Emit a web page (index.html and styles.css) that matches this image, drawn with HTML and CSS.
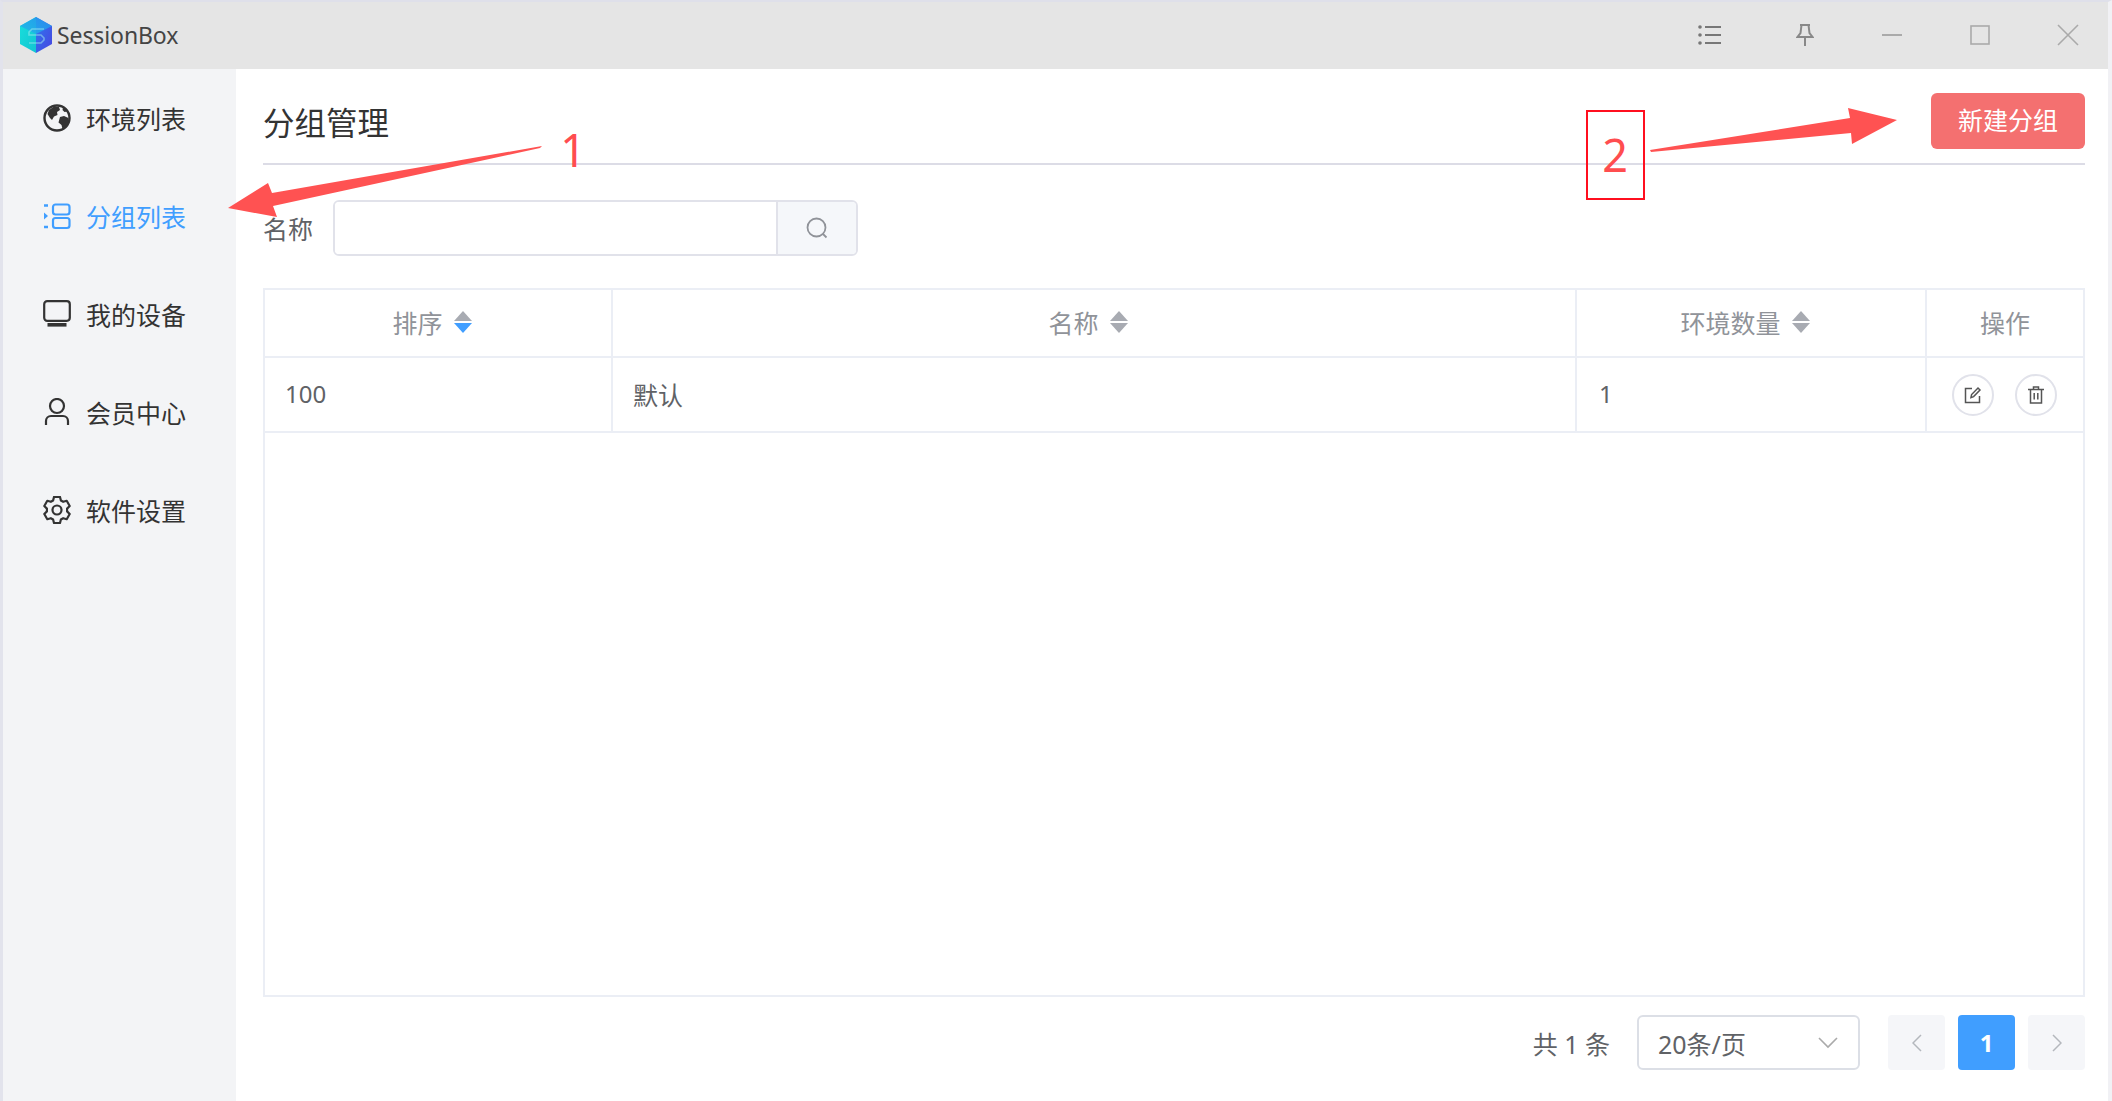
FILE: index.html
```html
<!DOCTYPE html>
<html lang="zh-CN">
<head>
<meta charset="utf-8">
<title>SessionBox</title>
<link rel="stylesheet" href="styles.css">
</head>
<body>
<div class="window">
  <header class="titlebar">
    <div class="brand">
      <svg class="logo" viewBox="0 0 34 36" aria-hidden="true">
        <defs>
          <linearGradient id="lgL" x1="0" y1="0" x2="1" y2="1"><stop offset="0" stop-color="#19e0dc"/><stop offset="1" stop-color="#12c4d2"/></linearGradient>
          <linearGradient id="lgR" x1="0" y1="0" x2="1" y2="1"><stop offset="0" stop-color="#2b7af0"/><stop offset="1" stop-color="#4a45e0"/></linearGradient>
          <linearGradient id="lgT" x1="0" y1="1" x2="1" y2="0"><stop offset="0" stop-color="#1fb6e8"/><stop offset="1" stop-color="#2a8ef0"/></linearGradient>
        </defs>
        <polygon points="17,0 33,9 33,27 17,36" fill="url(#lgR)"/>
        <polygon points="17,0 1,9 1,27 17,36" fill="url(#lgL)"/>
        <polygon points="17,0 33,9 17,17 1,9" fill="url(#lgT)" opacity=".85"/>
        <path d="M25 12 H13 L10 15 V18 H22 L25 21 V23 L22 26 H10" fill="none" stroke="#9fe9ee" stroke-width="1.600" opacity=".55"/>
      </svg>
      <span class="brand-name">SessionBox</span>
    </div>
    <div class="controls">
      <button class="ctl ctl-list" type="button" aria-label="列表">
        <svg width="24" height="20" viewBox="0 0 24 20"><g fill="#777"><circle cx="2" cy="2" r="1.8"/><circle cx="2" cy="10" r="1.8"/><circle cx="2" cy="18" r="1.8"/></g><g stroke="#777" stroke-width="2"><path d="M7 2h16M7 10h16M7 18h16"/></g></svg>
      </button>
      <button class="ctl ctl-pin" type="button" aria-label="置顶">
        <svg width="18" height="22" viewBox="0 0 18 22" fill="none" stroke="#888" stroke-width="2"><path d="M4 1h10M5.500 1l-1 8-3 4h15l-3-4-1-8M9 13v9"/></svg>
      </button>
      <button class="ctl" type="button" aria-label="最小化">
        <svg width="20" height="2" viewBox="0 0 20 2"><path d="M0 1h20" stroke="#aaa" stroke-width="2"/></svg>
      </button>
      <button class="ctl" type="button" aria-label="最大化">
        <svg width="20" height="20" viewBox="0 0 20 20"><rect x="1" y="1" width="18" height="18" fill="none" stroke="#aaa" stroke-width="1.6"/></svg>
      </button>
      <button class="ctl" type="button" aria-label="关闭">
        <svg width="22" height="22" viewBox="0 0 22 22"><path d="M1 1l20 20M21 1L1 21" stroke="#aaa" stroke-width="1.6"/></svg>
      </button>
    </div>
  </header>

  <div class="body">
    <nav class="sidebar">
      <a class="nav-item">
        <svg class="nav-icon" viewBox="0 0 28 28"><circle cx="14" cy="14" r="12.500" fill="none" stroke="#333" stroke-width="2.400"/><path d="M6 6l5-3.500 5 .5 1 3-3 2 .5 3-3.500 1.500-2 3.500-2-2-2.500-4z" fill="#333"/><path d="M17 13l4-1 4.500 2 .5 5-3 4.500-3.500 1.500-1-4-3-2.500z" fill="#333"/><path d="M20 3.500l3 2 1.500 2-3 .5-2-2z" fill="#333"/></svg>
        <span>环境列表</span>
      </a>
      <a class="nav-item is-active">
        <svg class="nav-icon" viewBox="0 0 28 28" fill="none" stroke="#409eff" stroke-width="2.200"><rect x="10" y="2.500" width="16.500" height="10" rx="2.500"/><rect x="10" y="16" width="16.500" height="10" rx="2.500"/><path d="M1 3.500h4M1 25h4" stroke-width="2.400"/><path d="M1 10.500l4 3.500-4 3.500z" fill="#409eff" stroke="none"/></svg>
        <span>分组列表</span>
      </a>
      <a class="nav-item">
        <svg class="nav-icon" viewBox="0 0 28 28"><rect x="1.200" y="1.200" width="25.600" height="19.600" rx="3" fill="none" stroke="#333" stroke-width="2.200"/><rect x="4.500" y="23" width="19" height="3.600" fill="#333"/></svg>
        <span>我的设备</span>
      </a>
      <a class="nav-item">
        <svg class="nav-icon" viewBox="0 0 28 28" fill="none" stroke="#333" stroke-width="2.200"><circle cx="14" cy="8" r="7"/><path d="M3 27v-4a5 5 0 0 1 5-5h12a5 5 0 0 1 5 5v4"/></svg>
        <span>会员中心</span>
      </a>
      <a class="nav-item">
        <svg class="nav-icon" viewBox="0 0 28 28" fill="none" stroke="#333" stroke-width="2.200"><circle cx="14" cy="14" r="4.500"/><path d="M11 .9h6l.9 3.600 2.300 1.300 3.500-1 3 5.200-2.600 2.600v2.800l2.600 2.600-3 5.200-3.500-1-2.300 1.300-.9 3.600h-6l-.9-3.600-2.300-1.300-3.500 1-3-5.200 2.600-2.600v-2.800L1.300 10l3-5.200 3.500 1 2.300-1.300z" stroke-linejoin="round"/></svg>
        <span>软件设置</span>
      </a>
    </nav>

    <main class="main">
      <div class="page-head">
        <h1 class="page-title">分组管理</h1>
        <button class="btn-new" type="button">新建分组</button>
      </div>

      <div class="search">
        <label class="search-label">名称</label>
        <div class="search-group">
          <div class="search-input"></div>
          <div class="search-btn">
            <svg width="22" height="22" viewBox="0 0 22 22" fill="none" stroke="#909399" stroke-width="1.800"><circle cx="10.500" cy="10.500" r="9"/><path d="M17 17l3.500 3.500"/></svg>
          </div>
        </div>
      </div>

      <div class="table-wrap">
        <table class="table">
          <colgroup><col class="col-a"><col class="col-b"><col class="col-c"><col></colgroup>
          <thead>
            <tr>
              <th><span class="th-in">排序<span class="sort is-desc"></span></span></th>
              <th><span class="th-in">名称<span class="sort"></span></span></th>
              <th><span class="th-in">环境数量<span class="sort"></span></span></th>
              <th>操作</th>
            </tr>
          </thead>
          <tbody>
            <tr>
              <td class="num">100</td>
              <td>默认</td>
              <td class="num num-count">1</td>
              <td>
                <div class="actions">
                  <button class="round" type="button" aria-label="编辑">
                    <svg width="18" height="18" viewBox="0 0 18 18" fill="none" stroke="#555" stroke-width="1.500"><path d="M8 2.500H1.500v14h14V10"/><path d="M7 11.500l.6-3L14 2l2 2-6.400 6.600z"/></svg>
                  </button>
                  <button class="round" type="button" aria-label="删除">
                    <svg width="16" height="18" viewBox="0 0 16 18" fill="none" stroke="#555" stroke-width="1.500"><path d="M0 3.500h16M5.500 3.500v-2.500h5v2.500M2.500 3.500v13.500h11V3.500M6.200 7v6.500M9.800 7v6.500"/></svg>
                  </button>
                </div>
              </td>
            </tr>
          </tbody>
        </table>
      </div>

      <div class="pager">
        <span class="pager-total">共 1 条</span>
        <div class="pager-size">
          <span>20条/页</span>
          <svg width="20" height="12" viewBox="0 0 20 12" fill="none" stroke="#aaa" stroke-width="1.600"><path d="M1 1l9 9 9-9"/></svg>
        </div>
        <div class="pager-pages">
          <button class="page" type="button" aria-label="上一页"><svg width="10" height="18" viewBox="0 0 10 18" fill="none" stroke="#b4b7bd" stroke-width="1.500"><path d="M9 1L1 9l8 8"/></svg></button>
          <button class="page is-current" type="button">1</button>
          <button class="page" type="button" aria-label="下一页"><svg width="10" height="18" viewBox="0 0 10 18" fill="none" stroke="#b4b7bd" stroke-width="1.500"><path d="M1 1l8 8-8 8"/></svg></button>
        </div>
      </div>
    </main>
  </div>

  <svg class="annot" viewBox="0 0 2112 1101" aria-hidden="false">
    <polygon class="annot-fill" points="542,146 540,148 273,206 277,217 228,208 268,183 272,193"/>
    <polygon class="annot-fill" points="1650,150 1651,152 1851,133 1852,144 1897,120 1848,108 1850,118"/>
    <rect class="annot-box" x="1587" y="111" width="57" height="88"/>
    <text class="annot-num" x="573" y="167">1</text>
    <text class="annot-num" x="1615" y="172">2</text>
  </svg>
</div>
</body>
</html>
```

FILE: styles.css
```css
* { box-sizing: border-box; }
html, body { margin: 0; height: 100%; }
body {
  font-family: "Noto Sans", "Noto Sans CJK SC", sans-serif;
  font-size: 25px;
  color: #606266;
  background: #fff;
  overflow: hidden;
}
button { font: inherit; padding: 0; border: 0; background: none; }

.window {
  position: relative;
  height: 1101px;
  display: flex;
  flex-direction: column;
  border-top: 2px solid #dfe0ea;
  border-left: 3px solid #e2e3ec;
  border-right: 4px solid #f1f1f5;
}

.titlebar {
  flex: 0 0 67px;
  display: flex;
  align-items: center;
  justify-content: space-between;
  padding-bottom: 2px;
  background: #e5e5e5;
}
.brand { display: flex; align-items: center; gap: 4px; padding-left: 16px; }
.logo { width: 34px; height: 36px; }
.brand-name { color: #444; font-size: 23px; letter-spacing: -.1px; }
.controls { display: flex; align-items: center; margin-right: -4px; }
.ctl { width: 88px; height: 65px; display: flex; align-items: center; justify-content: center; }
.ctl-list { margin-right: 7px; }
.ctl-pin { margin-right: -1px; }

.body { flex: 1; display: flex; min-height: 0; }

.sidebar { flex: 0 0 233px; background: #f3f4f6; }
.nav-item {
  height: 98px;
  display: flex;
  align-items: center;
  gap: 15px;
  padding-left: 40px;
  color: #333;
}
.nav-item.is-active { color: #409eff; }
.nav-icon { width: 28px; height: 28px; flex: none; }

.main {
  flex: 1;
  min-width: 0;
  display: flex;
  flex-direction: column;
  padding: 24px 23px 31px 27px;
}
.page-head {
  display: flex;
  justify-content: space-between;
  align-items: center;
  padding-bottom: 14px;
  border-bottom: 2px solid #dcdce6;
}
.page-title { margin: 0; font-size: 31.500px; font-weight: 400; color: #333; }
.btn-new {
  width: 154px;
  height: 56px;
  padding-bottom: 5px;
  border-radius: 6px;
  background: #f47070;
  color: #fff;
  font-size: 25px;
}

.search { display: flex; align-items: center; margin-top: 35px; height: 56px; }
.search-label { width: 70px; color: #606266; }
.search-group {
  width: 525px;
  height: 56px;
  display: flex;
  border: 2px solid #e1e2ea;
  border-radius: 6px;
  overflow: hidden;
}
.search-input { width: 441px; background: #fff; }
.search-btn {
  flex: 1;
  display: flex;
  align-items: center;
  justify-content: center;
  background: #f5f7fa;
  border-left: 2px solid #e1e2ea;
}

.table-wrap {
  flex: 1;
  margin-top: 32px;
  border: 2px solid #ebeef5;
  min-height: 0;
}
.table { width: 100%; border-collapse: collapse; table-layout: fixed; }
.col-a { width: 347px; }
.col-b { width: 964px; }
.col-c { width: 350px; }
.table th, .table td { border: 2px solid #ebeef5; border-top: 0; }
.table tr > :first-child { border-left: 0; }
.table tr > :last-child { border-right: 0; }
.table th { height: 67px; padding: 0 0 2px; font-weight: 400; color: #909399; text-align: center; }
.table td { height: 75px; padding: 0 20px 2px; color: #606266; }
.table td.num { font-size: 24px; }
.table td.num-count { padding-left: 22px; }
.table td:last-child { padding-bottom: 0; }
.th-in { display: inline-flex; align-items: center; gap: 11px; margin-right: 12px; }
.sort {
  display: inline-flex;
  flex-direction: column;
  gap: 2px;
  width: 18px;
}
.sort::before, .sort::after {
  content: "";
  display: block;
  width: 0;
  height: 0;
  border-left: 9px solid transparent;
  border-right: 9px solid transparent;
}
.sort::before { border-bottom: 10px solid #a8abb2; }
.sort::after { border-top: 10px solid #a8abb2; }
.sort.is-desc::after { border-top-color: #409eff; }

.actions { display: flex; justify-content: center; gap: 21px; margin-left: -2px; }
.round {
  width: 42px;
  height: 42px;
  border-radius: 50%;
  border: 2px solid #e1e2ea;
  background: #fff;
  display: flex;
  align-items: center;
  justify-content: center;
}

.pager { display: flex; align-items: center; height: 55px; margin-top: 18px; justify-content: flex-end; }
.pager-total { margin-right: 27px; }
.pager-size {
  width: 223px;
  height: 55px;
  display: flex;
  align-items: center;
  justify-content: space-between;
  padding: 0 20px 0 19px;
  border: 2px solid #dcdfe6;
  border-radius: 6px;
  margin-right: 28px;
}
.pager-pages { display: flex; gap: 13px; }
.page {
  width: 57px;
  height: 55px;
  border-radius: 4px;
  background: #f5f6f9;
  display: flex;
  align-items: center;
  justify-content: center;
}
.page.is-current { background: #409eff; color: #fff; font-weight: 700; font-size: 24px; }

.annot { position: absolute; left: -3px; top: -2px; width: 2112px; height: 1101px; pointer-events: none; }
.annot-fill { fill: #ff5252; }
.annot-box { fill: none; stroke: #ff0f1f; stroke-width: 2; }
.annot-num { font-family: "Noto Sans", sans-serif; font-size: 45px; fill: #ff4d4f; text-anchor: middle; }
```
